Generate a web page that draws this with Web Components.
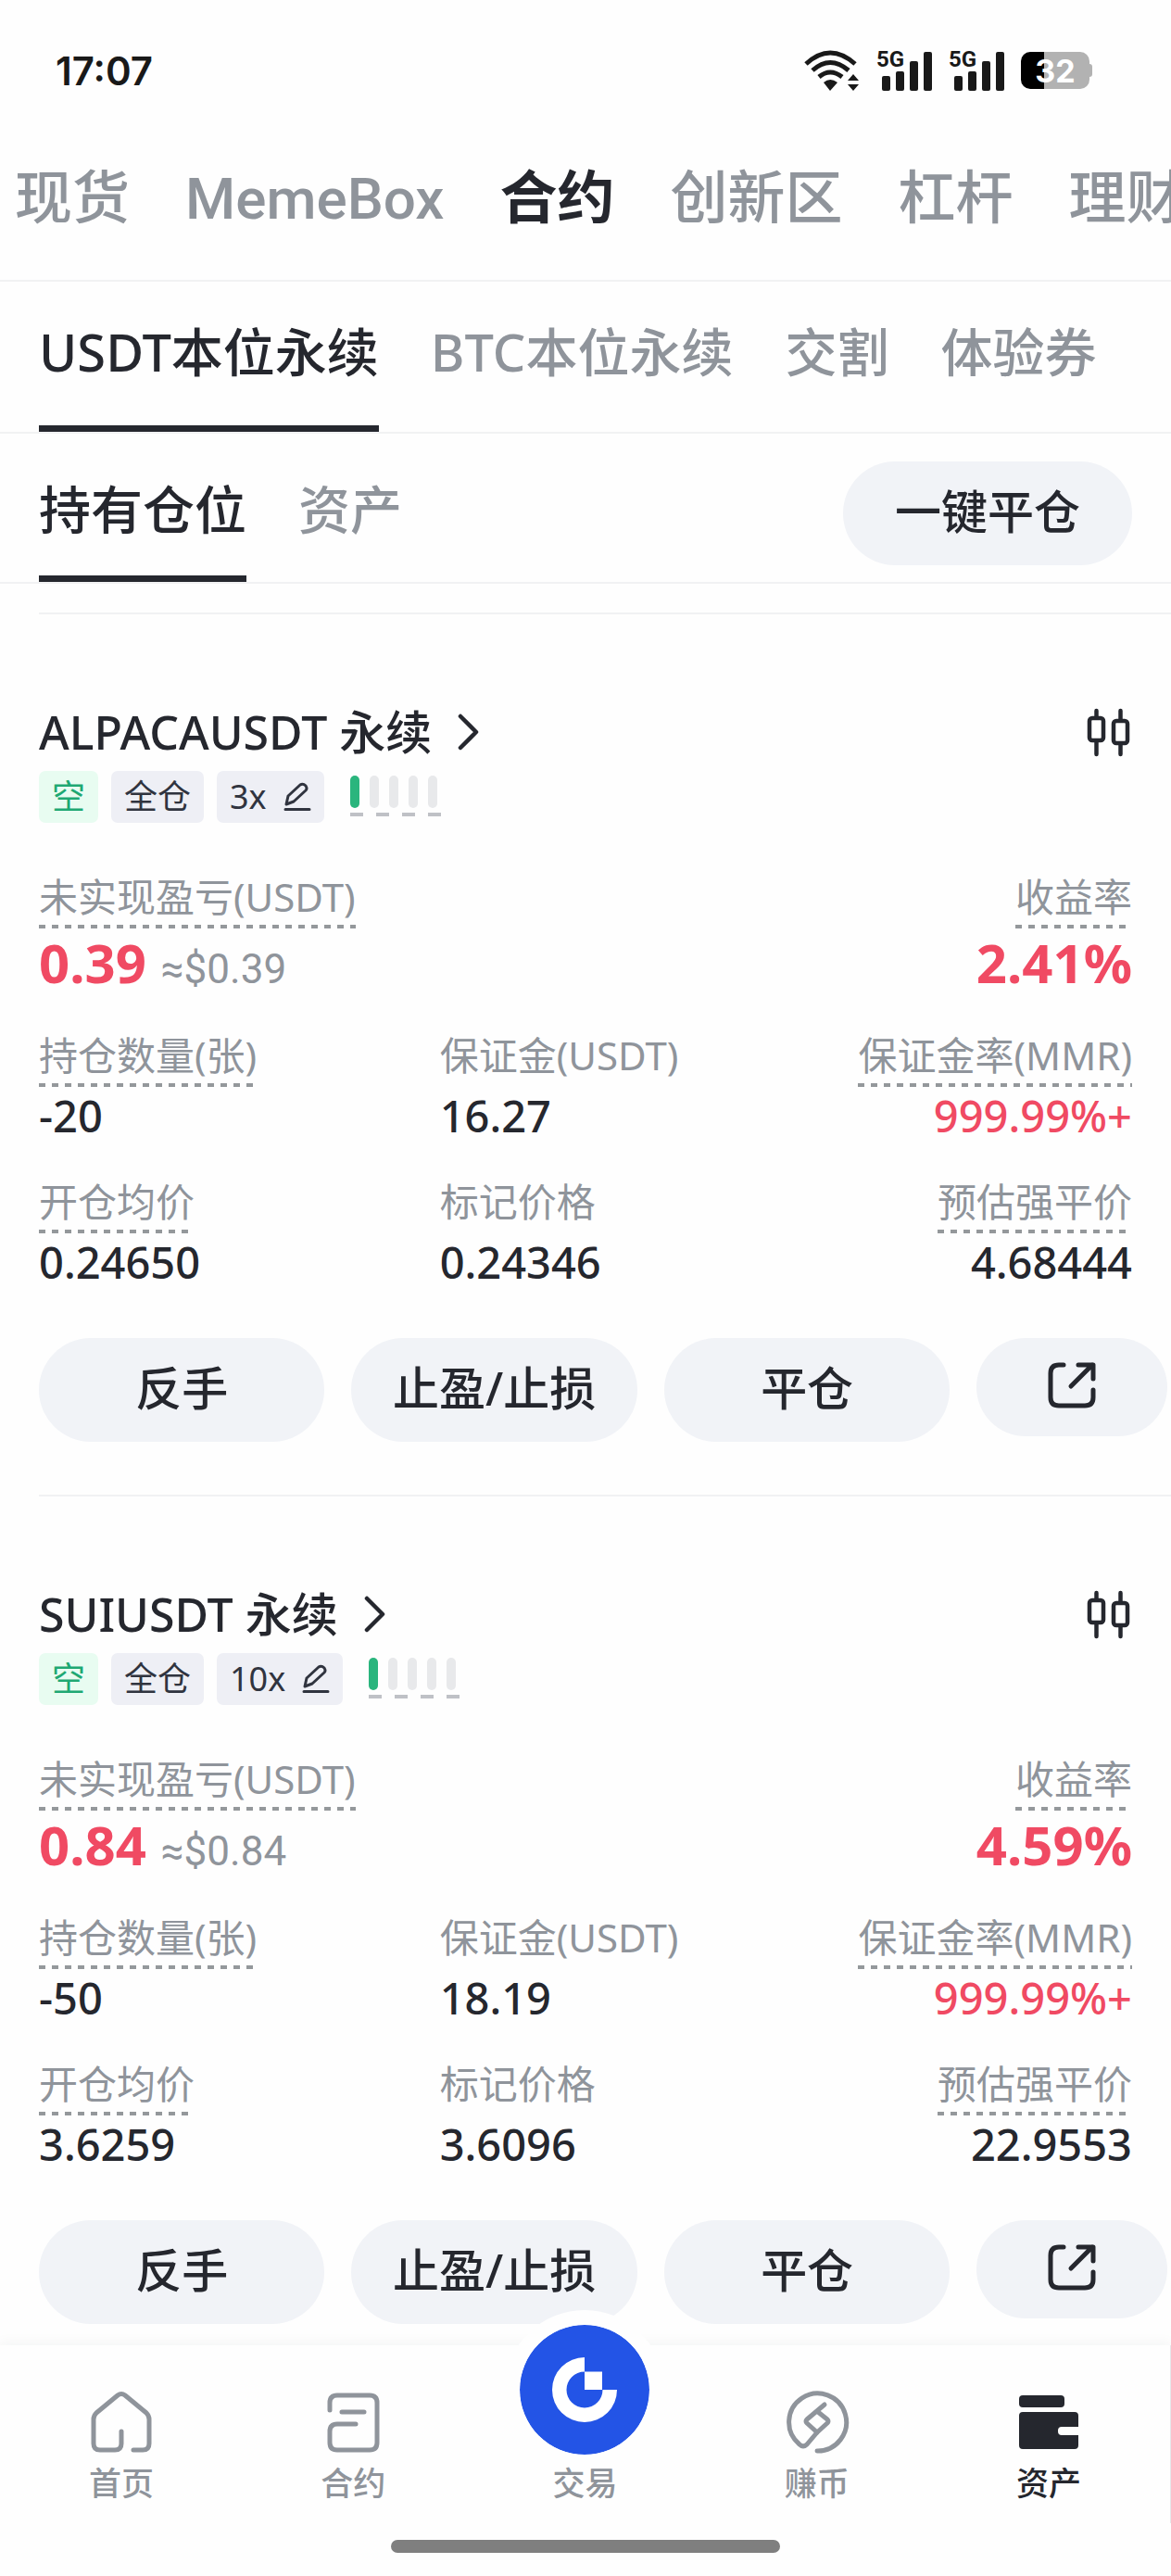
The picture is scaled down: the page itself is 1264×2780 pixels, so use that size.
<!DOCTYPE html>
<html lang="zh-CN">
<head>
<meta charset="utf-8">
<meta name="viewport" content="width=device-width, initial-scale=1">
<title>资产</title>
<style>
    :root {
        --ink: #25272e;
        --muted: #8f949b;
        --line: #f1f2f3;
        --fill: #f1f3f7;
        --red: #f04a63;
        --green: #2ab57d;
        --side: 42px;
    }

    body {
        margin: 0;
        background: #fefefe;
        color: var(--ink);
        font-family: "Noto Sans", "Noto Sans CJK SC", sans-serif;
    }
</style>
</head>
<body>
<app-screen>
    <status-bar slot="top" time="17:07" battery="32"></status-bar>
    <tab-strip slot="top" variant="main">
        <tab-item>现货</tab-item>
        <tab-item>MemeBox</tab-item>
        <tab-item active>合约</tab-item>
        <tab-item>创新区</tab-item>
        <tab-item>杠杆</tab-item>
        <tab-item>理财</tab-item>
    </tab-strip>
    <tab-strip slot="top" variant="sub">
        <tab-item active>USDT本位永续</tab-item>
        <tab-item>BTC本位永续</tab-item>
        <tab-item>交割</tab-item>
        <tab-item>体验券</tab-item>
    </tab-strip>
    <tab-strip slot="top" variant="list">
        <tab-item active>持有仓位</tab-item>
        <tab-item>资产</tab-item>
        <pill-button slot="action">一键平仓</pill-button>
    </tab-strip>

    <position-card symbol="ALPACAUSDT" leverage="3x">
        <metric-item slot="summary" label="未实现盈亏(USDT)" value="0.39" note="≈$0.39" size="large" tone="red" hint></metric-item>
        <metric-item slot="summary" label="收益率" value="2.41%" size="large" tone="red" align="end" hint></metric-item>
        <metric-item label="持仓数量(张)" value="-20" hint></metric-item>
        <metric-item label="保证金(USDT)" value="16.27"></metric-item>
        <metric-item label="保证金率(MMR)" value="999.99%+" tone="red" align="end" hint></metric-item>
        <metric-item label="开仓均价" value="0.24650" hint></metric-item>
        <metric-item label="标记价格" value="0.24346"></metric-item>
        <metric-item label="预估强平价" value="4.68444" align="end" hint></metric-item>
    </position-card>
    <position-card symbol="SUIUSDT" leverage="10x">
        <metric-item slot="summary" label="未实现盈亏(USDT)" value="0.84" note="≈$0.84" size="large" tone="red" hint></metric-item>
        <metric-item slot="summary" label="收益率" value="4.59%" size="large" tone="red" align="end" hint></metric-item>
        <metric-item label="持仓数量(张)" value="-50" hint></metric-item>
        <metric-item label="保证金(USDT)" value="18.19"></metric-item>
        <metric-item label="保证金率(MMR)" value="999.99%+" tone="red" align="end" hint></metric-item>
        <metric-item label="开仓均价" value="3.6259" hint></metric-item>
        <metric-item label="标记价格" value="3.6096"></metric-item>
        <metric-item label="预估强平价" value="22.9553" align="end" hint></metric-item>
    </position-card>

    <bottom-nav slot="bottom">
        <nav-link icon="home">首页</nav-link>
        <nav-link icon="contract">合约</nav-link>
        <nav-link icon="trade">交易</nav-link>
        <nav-link icon="earn">赚币</nav-link>
        <nav-link icon="wallet" active>资产</nav-link>
    </bottom-nav>
</app-screen>

<script>
const ICONS = {
    home: `<svg width="70" height="70" viewBox="0 0 70 70" fill="none" stroke="currentColor" stroke-width="5" stroke-linecap="round" stroke-linejoin="round">
        <path d="M35 45V58Q35 65 28 65H12Q5 65 5 58V32Q5 28 8 25L31 6Q35 3 39 6L62 25Q65 28 65 32V58Q65 65 58 65H48"/></svg>`,
    contract: `<svg width="70" height="70" viewBox="0 0 70 70" fill="none" stroke="currentColor" stroke-width="5" stroke-linecap="round">
        <path d="M10 22V14Q10 6 18 6H53Q61 6 61 14V57Q61 65 53 65H18Q10 65 10 57V45Q10 37 18 37H38M23 24H47"/></svg>`,
    trade: `<svg width="140" height="140" viewBox="0 0 140 140">
        <circle cx="70" cy="70" r="70" fill="#2354e6"/>
        <path fill="#fff" d="M70 35A35 35 0 1 0 105 70H89.500A19.500 19.500 0 1 1 70 50.500Z"/>
        <path fill="#fff" d="M70 50.500H89V70H70Z"/></svg>`,
    earn: `<svg width="70" height="70" viewBox="0 0 70 70" fill="none" stroke="currentColor" stroke-width="5" stroke-linecap="round" stroke-linejoin="round">
        <path d="M35 66A31 31 0 1 0 16 59Q20 63 24 59L35 46L46 36Q48 34 46 32L36 24"/>
        <path d="M43 16L24 32Q22 34 24 36L35 46"/></svg>`,
    wallet: `<svg width="70" height="70" viewBox="0 0 70 70" fill="currentColor">
        <rect x="3" y="6" width="49" height="13" rx="4"/>
        <path d="M7 24H63Q67 24 67 28V40H49Q45 40 45 44V45Q45 49 49 49H67V60Q67 64 63 64H7Q3 64 3 60V28Q3 24 7 24Z"/></svg>`,
    chevron: `<svg width="24" height="40" viewBox="0 0 24 40" fill="none" stroke="currentColor" stroke-width="4.500" stroke-linecap="round" stroke-linejoin="round">
        <path d="M3 3L20 20L3 37"/></svg>`,
    candles: `<svg width="50" height="54" viewBox="0 0 50 54" fill="none" stroke="currentColor" stroke-width="4.500" stroke-linecap="round">
        <rect x="4" y="12" width="15" height="24" rx="3"/>
        <rect x="30" y="15" width="15" height="24" rx="3"/>
        <path d="M11.500 4V11M11.500 37V51M37.500 4V14M37.500 40V51"/></svg>`,
    pencil: `<svg width="30" height="32" viewBox="0 0 30 32" fill="none" stroke="currentColor" stroke-width="3" stroke-linejoin="round" stroke-linecap="round">
        <path d="M3 24L5 15L18 3Q21 1 24 4Q26 7 24 9L11 21ZM2 29.500H28"/></svg>`,
    share: `<svg width="52" height="52" viewBox="0 0 52 52" fill="none" stroke="currentColor" stroke-width="5" stroke-linecap="round" stroke-linejoin="round">
        <path d="M17 4H12Q3 4 3 13V39Q3 48 12 48H40Q49 48 49 39V31"/>
        <path d="M25 27L48 4M33 4H49V19"/></svg>`,
    wifi: `<svg width="60" height="44" viewBox="0 0 60 44" fill="none" stroke="currentColor" stroke-width="5">
        <path d="M2 15Q28 -9 55 15M9 22Q28 5 48 22M16 29Q28 19 41 29"/>
        <path fill="currentColor" stroke="none" d="M21 35Q28 29 36 35L28 44ZM53 26L59 33H47ZM53 44L47 37H59Z"/></svg>`,
    signal: `<svg width="54" height="44" viewBox="0 0 54 44" fill="currentColor">
        <rect x="0" y="28" width="9" height="16" rx="2"/>
        <rect x="15" y="23" width="9" height="21" rx="2"/>
        <rect x="30" y="12" width="9" height="32" rx="2"/>
        <rect x="45" y="2" width="9" height="42" rx="2"/></svg>`
};

class AppScreen extends HTMLElement {
    constructor() {
        super();
        this.attachShadow({ mode: 'open' });
        this.shadowRoot.innerHTML = `
            <style>
                :host {
                    display: flex;
                    flex-direction: column;
                    height: 100vh;
                    overflow: hidden;
                }

                header, footer {
                    flex-shrink: 0;
                }

                main {
                    flex: 1;
                    min-height: 0;
                    overflow-y: auto;
                    scrollbar-width: none;
                    padding-top: 31px;
                }
            </style>
            <header><slot name="top"></slot></header>
            <main><slot></slot></main>
            <footer><slot name="bottom"></slot></footer>
        `;
    }
}

class StatusBar extends HTMLElement {
    connectedCallback() {
        this.attachShadow({ mode: 'open' });
        this.shadowRoot.innerHTML = `
            <style>
                :host {
                    display: flex;
                    align-items: center;
                    justify-content: space-between;
                    height: 152px;
                    padding: 0 88px 0 60px;
                    color: #191919;
                    font-family: Inter, sans-serif;
                    font-weight: 600;
                }

                time {
                    font-size: 42px;
                }

                .icons {
                    display: flex;
                    align-items: center;
                    gap: 18px;
                }

                svg {
                    display: block;
                }

                .signal {
                    position: relative;
                    padding-left: 6px;
                }

                .signal span {
                    position: absolute;
                    left: 0;
                    top: -2px;
                    font: 700 24px/24px Roboto, sans-serif;
                }

                .battery {
                    position: relative;
                    width: 74px;
                    height: 40px;
                    border-radius: 10px;
                    background: linear-gradient(to right, #000 25px, #b2b2b2 25px);
                    color: #fff;
                    font-size: 34px;
                    font-weight: 700;
                    line-height: 42px;
                    text-align: center;
                }

                .battery::after {
                    content: "";
                    position: absolute;
                    left: 74px;
                    top: 13px;
                    width: 3px;
                    height: 14px;
                    border-radius: 0 3px 3px 0;
                    background: #b2b2b2;
                }
            </style>
            <time>${this.getAttribute('time')}</time>
            <div class="icons">
                ${ICONS.wifi}
                <div class="signal"><span>5G</span>${ICONS.signal}</div>
                <div class="signal"><span>5G</span>${ICONS.signal}</div>
                <div class="battery">${this.getAttribute('battery')}</div>
            </div>
        `;
    }
}

class TabStrip extends HTMLElement {
    constructor() {
        super();
        this.attachShadow({ mode: 'open' });
        this.shadowRoot.innerHTML = `
            <style>
                :host {
                    display: flex;
                    justify-content: space-between;
                    padding: 0 var(--side);
                    border-bottom: 2px solid var(--line);
                    overflow: hidden;
                }

                :host([variant="main"]) {
                    --tab-size: 62px;
                    --tab-line: 90px;
                    --tab-pad: 18px 0 42px;
                    --tab-bar: 0px;
                    --tab-bold: 700;
                    --tab-font: Roboto;
                    padding: 0 0 0 16px;
                }

                :host([variant="sub"]) {
                    --tab-pad: 35px 0 40px;
                }

                :host([variant="list"]) {
                    --tab-pad: 41px 0 32px;
                }

                .tabs {
                    display: flex;
                    gap: 56px;
                }

                :host([variant="main"]) .tabs {
                    gap: 60px;
                }

                ::slotted(pill-button) {
                    align-self: flex-end;
                    margin-bottom: 18px;
                }
            </style>
            <div class="tabs" role="tablist"><slot></slot></div>
            <slot name="action"></slot>
        `;
    }
}

class TabItem extends HTMLElement {
    connectedCallback() {
        this.attachShadow({ mode: 'open' });
        const active = this.hasAttribute('active');
        this.shadowRoot.innerHTML = `
            <style>
                :host {
                    display: block;
                    flex-shrink: 0;
                }

                button {
                    display: block;
                    margin: 0;
                    padding: var(--tab-pad);
                    border: 0;
                    border-bottom: var(--tab-bar, 7px) solid transparent;
                    background: none;
                    color: var(--muted);
                    font: 500 var(--tab-size, 56px)/var(--tab-line, 80px) var(--tab-font, "Noto Sans"), "Noto Sans CJK SC", sans-serif;
                    white-space: nowrap;
                }

                :host([active]) button {
                    color: var(--ink);
                    border-color: var(--ink);
                    font-weight: var(--tab-bold, 500);
                }
            </style>
            <button type="button" role="tab" aria-selected="${active}"><slot></slot></button>
        `;
    }
}

class PillButton extends HTMLElement {
    constructor() {
        super();
        this.attachShadow({ mode: 'open' });
        this.shadowRoot.innerHTML = `
            <style>
                :host {
                    display: block;
                    --pill-pad: 56px;
                }

                button {
                    display: flex;
                    align-items: center;
                    justify-content: center;
                    width: 100%;
                    height: var(--pill-height, 112px);
                    margin: 0;
                    padding: 0 var(--pill-pad) 4px;
                    border: 0;
                    border-radius: 56px;
                    background: var(--fill);
                    color: inherit;
                    font: 500 50px/72px "Noto Sans", "Noto Sans CJK SC", sans-serif;
                    white-space: nowrap;
                }

                :host([fit]) {
                    --pill-pad: 0;
                }

                :host([icon]) {
                    --pill-height: 106px;
                }
            </style>
            <button type="button"><slot></slot></button>
        `;
    }
}

class MetricItem extends HTMLElement {
    connectedCallback() {
        this.attachShadow({ mode: 'open' });
        const note = this.getAttribute('note');
        this.shadowRoot.innerHTML = `
            <style>
                :host {
                    display: flex;
                    flex-direction: column;
                    align-items: flex-start;
                    white-space: nowrap;
                }

                :host([align="end"]) {
                    align-items: flex-end;
                }

                .label {
                    padding-bottom: 9px;
                    color: var(--muted);
                    font-size: 42px;
                    line-height: 50px;
                }

                :host([hint]) .label {
                    background: repeating-linear-gradient(to right, #94989b 0 7px, transparent 7px 14px) left bottom / 100% 4px no-repeat;
                }

                .value {
                    font-size: 47px;
                    font-weight: 500;
                    line-height: 62px;
                }

                :host([tone="red"]) .value {
                    color: var(--red);
                }

                :host([size="large"]) .value {
                    font-size: 58px;
                    font-weight: 700;
                    line-height: 74px;
                }

                small {
                    margin-left: 16px;
                    color: var(--muted);
                    font: 400 44px/44px Roboto, sans-serif;
                }
            </style>
            <div class="label">${this.getAttribute('label')}</div>
            <div class="value">${this.getAttribute('value')}${note ? `<small>${note}</small>` : ''}</div>
        `;
    }
}

class PositionCard extends HTMLElement {
    connectedCallback() {
        this.attachShadow({ mode: 'open' });
        this.shadowRoot.innerHTML = `
            <style>
                :host {
                    display: block;
                    margin-left: var(--side);
                    padding: 95px 0 57px;
                    border-top: 2px solid var(--line);
                }

                .body {
                    padding-right: var(--side);
                }

                .head {
                    display: flex;
                    align-items: center;
                    justify-content: space-between;
                    height: 64px;
                }

                h2 {
                    margin: 0;
                    font-size: 50px;
                    font-weight: 500;
                    line-height: 64px;
                }

                h2 a {
                    display: flex;
                    align-items: center;
                    gap: 28px;
                    color: inherit;
                    text-decoration: none;
                }

                svg {
                    display: block;
                }

                button {
                    margin: 0;
                    padding: 0;
                    border: 0;
                    background: none;
                    color: inherit;
                    font: inherit;
                }

                .tags {
                    display: flex;
                    gap: 14px;
                    margin: 10px 0 55px;
                }

                .tag {
                    display: flex;
                    align-items: center;
                    gap: 18px;
                    height: 56px;
                    padding: 0 14px;
                    border-radius: 7px;
                    background: #eeeff5;
                    color: #30343f;
                    font-size: 36px;
                    line-height: 56px;
                }

                .tag.short {
                    background: #e8fcf1;
                    color: #1fa873;
                }

                .risk {
                    width: 98px;
                    margin: 5px 0 0 14px;
                    padding-bottom: 9px;
                    align-self: flex-start;
                    display: flex;
                    gap: 11px;
                    background: repeating-linear-gradient(to right, #bfc1c6 0 14px, transparent 14px 28px) left bottom / 100% 4px no-repeat;
                }

                .risk i {
                    width: 10px;
                    height: 35px;
                    border-radius: 5px;
                    background: #e8e9eb;
                }

                .risk i:first-child {
                    background: var(--green);
                }

                .summary {
                    display: flex;
                    justify-content: space-between;
                    margin-bottom: 38px;
                }

                .grid {
                    display: grid;
                    grid-template-columns: 11fr 8fr 11fr;
                    row-gap: 37px;
                    margin-bottom: 51px;
                }

                .actions {
                    display: grid;
                    grid-template-columns: 3fr 3fr 3fr 2fr;
                    gap: 29px;
                    align-items: start;
                    padding-right: 4px;
                }
            </style>
            <div class="body">
                <div class="head">
                    <h2><a href="#">${this.getAttribute('symbol')} 永续 ${ICONS.chevron}</a></h2>
                    <button type="button" aria-label="K线">${ICONS.candles}</button>
                </div>
                <div class="tags">
                    <span class="tag short">空</span>
                    <span class="tag">全仓</span>
                    <button type="button" class="tag">${this.getAttribute('leverage')} ${ICONS.pencil}</button>
                    <span class="risk"><i></i><i></i><i></i><i></i><i></i></span>
                </div>
                <div class="summary"><slot name="summary"></slot></div>
                <div class="grid"><slot></slot></div>
            </div>
            <div class="actions">
                <pill-button fit>反手</pill-button>
                <pill-button fit>止盈/止损</pill-button>
                <pill-button fit>平仓</pill-button>
                <pill-button fit icon>${ICONS.share}</pill-button>
            </div>
        `;
    }
}

class BottomNav extends HTMLElement {
    constructor() {
        super();
        this.attachShadow({ mode: 'open' });
        this.shadowRoot.innerHTML = `
            <style>
                :host {
                    display: block;
                    position: relative;
                    background: #fefefe;
                    box-shadow: 0 -4px 12px rgba(30, 40, 60, 0.04);
                }

                nav {
                    display: grid;
                    grid-template-columns: repeat(5, 1fr);
                    height: 192px;
                    padding: 0 6px;
                    border-right: 1px solid #e6e7e9;
                }

                .foot {
                    display: flex;
                    justify-content: center;
                    padding: 18px 0 25px;
                }

                .handle {
                    width: 420px;
                    height: 14px;
                    border-radius: 7px;
                    background: #7f7f7f;
                }
            </style>
            <nav><slot></slot></nav>
            <div class="foot"><div class="handle"></div></div>
        `;
    }
}

class NavLink extends HTMLElement {
    connectedCallback() {
        this.attachShadow({ mode: 'open' });
        this.shadowRoot.innerHTML = `
            <style>
                :host {
                    display: block;
                }

                a {
                    display: flex;
                    flex-direction: column;
                    align-items: center;
                    justify-content: flex-end;
                    gap: 5px;
                    height: 175px;
                    color: var(--muted);
                    font-size: 35px;
                    font-weight: 500;
                    line-height: 52px;
                    text-decoration: none;
                }

                :host([active]) a {
                    color: var(--ink);
                }

                svg {
                    display: block;
                    flex-shrink: 0;
                }

                /* raised round button with a page-coloured ring */
                :host([icon="trade"]) svg {
                    border: 16px solid #fefefe;
                    border-radius: 50%;
                    margin-bottom: -16px;
                    background: #fefefe;
                }
            </style>
            <a href="#">${ICONS[this.getAttribute('icon')]}<span><slot></slot></span></a>
        `;
    }
}

customElements.define('app-screen', AppScreen);
customElements.define('status-bar', StatusBar);
customElements.define('tab-strip', TabStrip);
customElements.define('tab-item', TabItem);
customElements.define('pill-button', PillButton);
customElements.define('metric-item', MetricItem);
customElements.define('position-card', PositionCard);
customElements.define('bottom-nav', BottomNav);
customElements.define('nav-link', NavLink);
</script>
</body>
</html>
